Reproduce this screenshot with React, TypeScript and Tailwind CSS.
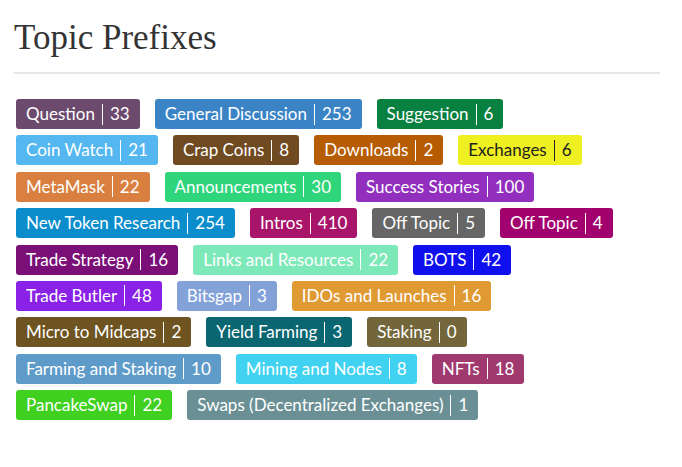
const prefixes: { name: string; count: number; bg: string; dark?: boolean }[] = [
  { name: "Question", count: 33, bg: "bg-[#6b4a6e]" },
  { name: "General Discussion", count: 253, bg: "bg-[#3a84c6]" },
  { name: "Suggestion", count: 6, bg: "bg-[#08803f]" },
  { name: "Coin Watch", count: 21, bg: "bg-[#55b7f0]" },
  { name: "Crap Coins", count: 8, bg: "bg-[#704a20]" },
  { name: "Downloads", count: 2, bg: "bg-[#b65c02]" },
  { name: "Exchanges", count: 6, bg: "bg-[#eef021]", dark: true },
  { name: "MetaMask", count: 22, bg: "bg-[#d98040]" },
  { name: "Announcements", count: 30, bg: "bg-[#2ed57a]" },
  { name: "Success Stories", count: 100, bg: "bg-[#932fbf]" },
  { name: "New Token Research", count: 254, bg: "bg-[#0b8dcc]" },
  { name: "Intros", count: 410, bg: "bg-[#a8146a]" },
  { name: "Off Topic", count: 5, bg: "bg-[#666666]" },
  { name: "Off Topic", count: 4, bg: "bg-[#a2026e]" },
  { name: "Trade Strategy", count: 16, bg: "bg-[#7a0f77]" },
  { name: "Links and Resources", count: 22, bg: "bg-[#7de8b8]" },
  { name: "BOTS", count: 42, bg: "bg-[#1010ee]" },
  { name: "Trade Butler", count: 48, bg: "bg-[#8a21e6]" },
  { name: "Bitsgap", count: 3, bg: "bg-[#82a2d8]" },
  { name: "IDOs and Launches", count: 16, bg: "bg-[#e09a34]" },
  { name: "Micro to Midcaps", count: 2, bg: "bg-[#6d5420]" },
  { name: "Yield Farming", count: 3, bg: "bg-[#0a6670]" },
  { name: "Staking", count: 0, bg: "bg-[#72663a]" },
  { name: "Farming and Staking", count: 10, bg: "bg-[#5f9bc9]" },
  { name: "Mining and Nodes", count: 8, bg: "bg-[#40d2f0]" },
  { name: "NFTs", count: 18, bg: "bg-[#a03a6e]" },
  { name: "PancakeSwap", count: 22, bg: "bg-[#40d020]" },
  { name: "Swaps (Decentralized Exchanges)", count: 1, bg: "bg-[#6a8f95]" },
];

export default function App() {
  return (
    <div className="w-[682px] h-[467px] bg-white px-[14px] pt-[17px]">
      <h1 className="text-[35px] leading-[42px] text-[#333] font-['Liberation_Serif',serif]">Topic Prefixes</h1>
      <hr className="w-[646px] mt-[13px] border-0 h-[2px] bg-[#e6e6e6]" />

      {/* Prefix badges */}
      <div className="flex flex-wrap gap-x-[15px] gap-y-[6.4px] mt-[25px] ml-[2px] w-[640px] font-['Lato','Open_Sans',sans-serif]">
        {prefixes.map((p, i) => (
          <span
            key={i}
            className={`${p.bg} ${p.dark ? "text-[#222]" : "text-white"} h-[30px] flex items-center px-[10px] rounded-[3px] text-[17px] leading-[30px]`}
          >
            {p.name}
            <span className={`w-px h-[21px] mx-[7px] ${p.dark ? "bg-[#222]" : "bg-white"}`} />
            {p.count}
          </span>
        ))}
      </div>
    </div>
  );
}
